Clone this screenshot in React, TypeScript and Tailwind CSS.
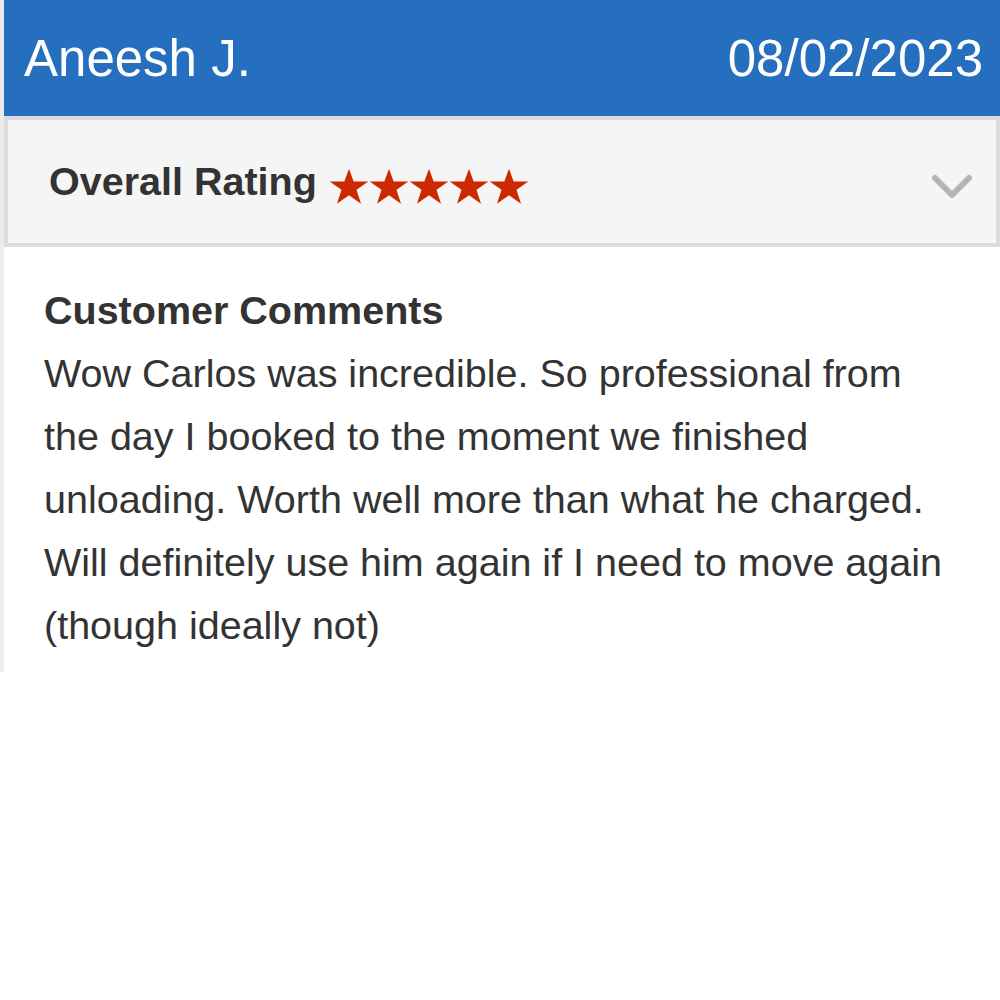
function Star() {
  return (
    <svg width="40" height="37" viewBox="0 0 24 22" className="shrink-0">
      <path
        d="M12 0.4l2.8 7.6h8.8l-7.1 5 2.7 8.4L12 16.3l-7.2 5.1 2.7-8.4-7.1-5h8.8z"
        fill="#cc2900"
      />
    </svg>
  )
}

export default function App() {
  return (
    <div
      className="w-[1000px] h-[1000px] bg-white overflow-hidden"
      style={{ fontFamily: '"Liberation Sans", Arial, sans-serif' }}
    >
      <div className="border-l-4 border-[#ececec]">
        {/* Header */}
        <div className="h-[116px] bg-[#266fbe] flex items-center justify-between pl-5 pr-[17px] text-white text-[51px] leading-none">
          <span>Aneesh J.</span>
          <span>08/02/2023</span>
        </div>

        {/* Overall rating row */}
        <div className="h-[131px] border-4 border-[#dcdcdc] bg-[#f5f5f5] flex items-center pl-[41px] pr-[21px]">
          <span className="text-[39.5px] font-bold text-[#333] leading-none">Overall Rating</span>
          <div className="flex ml-3 mt-[10px]">
            <Star />
            <Star />
            <Star />
            <Star />
            <Star />
          </div>
          <svg width="44" height="30" viewBox="0 0 44 30" className="ml-auto mt-[10px]">
            <polyline
              points="4,6 21,23 38,6"
              fill="none"
              stroke="#b4b4b4"
              strokeWidth="6"
              strokeLinecap="round"
              strokeLinejoin="round"
            />
          </svg>
        </div>

        {/* Comments */}
        <div className="pt-[32px] pb-[15px] pl-10 pr-[45px] text-[39.5px] leading-[63px] text-[#333]">
          <div className="font-bold">Customer Comments</div>
          <p>
            Wow Carlos was incredible. So professional from the day I booked to the moment we finished
            unloading. Worth well more than what he charged. Will definitely use him again if I need to
            move again (though ideally not)
          </p>
        </div>
      </div>
    </div>
  )
}
